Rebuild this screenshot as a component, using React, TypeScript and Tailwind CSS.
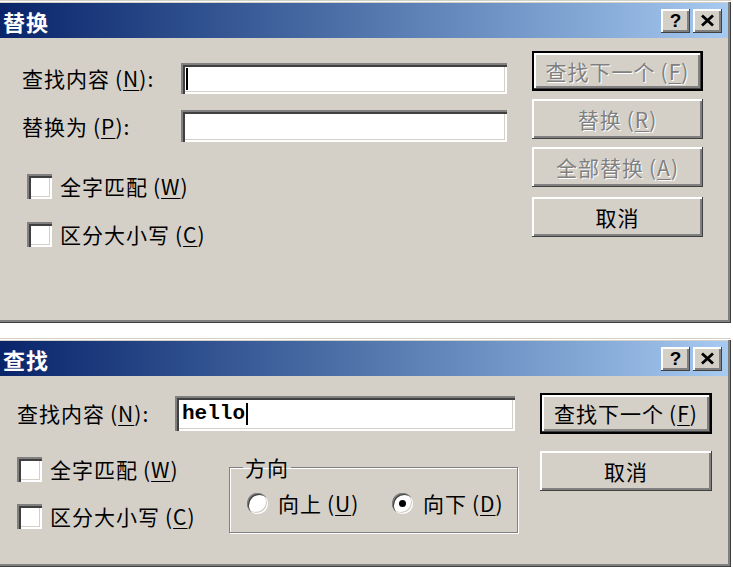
import React from "react";

const raised =
  "bg-[#d4d0c8] shadow-[inset_-1px_-1px_0_#404040,inset_2px_2px_0_#ffffff,inset_-3px_-3px_0_#808080]";
const sunken =
  "bg-white shadow-[inset_2px_2px_0_#808080,inset_4px_4px_0_#404040,inset_-2px_-2px_0_#ffffff,inset_-3px_-3px_0_#d4d0c8]";

function Acc({ k }: { k: string }) {
  return (
    <span className="ml-[5px] tracking-[1px]">
      (<span className="underline underline-offset-[3px] decoration-1">{k}</span>)
    </span>
  );
}

function TitleBar({ title }: { title: string }) {
  return (
    <div className="h-[35px] flex items-center bg-linear-to-r from-[#0a246a] to-[#a6caf0]">
      <span className="pl-[3px] text-white font-bold text-[22px] tracking-[1px] leading-none">
        {title}
      </span>
      <div className="ml-auto mr-[6px] flex gap-[3px]">
        <div
          className={`w-[29px] h-[24px] ${raised} flex items-center justify-center font-['Liberation_Sans',sans-serif] font-bold text-[19px] leading-none text-black`}
        >
          ?
        </div>
        <div className={`w-[29px] h-[24px] ${raised} flex items-center justify-center`}>
          <svg width="15" height="13" viewBox="0 0 15 13">
            <path d="M2 1.5 L13 11.5 M13 1.5 L2 11.5" stroke="#000" strokeWidth="2.8" />
          </svg>
        </div>
      </div>
    </div>
  );
}

function Btn({
  children,
  disabled,
  isDefault,
  h,
}: {
  children: React.ReactNode;
  disabled?: boolean;
  isDefault?: boolean;
  h: string;
}) {
  const text = disabled
    ? "text-[#808080] [text-shadow:1px_1px_0_#ffffff]"
    : "text-black";
  if (isDefault) {
    return (
      <div className={`${h} border-2 border-black flex`}>
        <div className={`flex-1 ${raised} flex items-center justify-center ${text} text-[21px] tracking-[1px] leading-none whitespace-nowrap`}>
          {children}
        </div>
      </div>
    );
  }
  return (
    <div className={`${h} ${raised} flex items-center justify-center ${text} text-[21px] tracking-[1px] leading-none whitespace-nowrap`}>
      {children}
    </div>
  );
}

function Check({ label, k }: { label: string; k: string }) {
  return (
    <div className="flex items-center h-[25px]">
      <div className={`w-[25px] h-[25px] ${sunken}`} />
      <span className="ml-[8px] text-[21px] tracking-[1px] leading-none whitespace-nowrap">
        {label}
        <Acc k={k} />
      </span>
    </div>
  );
}

function Radio({ label, k, on, w }: { label: string; k: string; on?: boolean; w: string }) {
  return (
    <div className={`flex items-center ${w}`}>
      <div className="w-[21px] h-[21px] shrink-0 rounded-full bg-white shadow-[inset_1px_1px_0_#808080,inset_2px_2px_0_#404040,inset_-1px_-1px_0_#ffffff,inset_-2px_-2px_0_#d4d0c8] flex items-center justify-center">
        {on && <div className="w-[7px] h-[7px] rounded-full bg-black" />}
      </div>
      <span className="ml-[10px] text-[21px] tracking-[1px] leading-none whitespace-nowrap">
        {label}
        <Acc k={k} />
      </span>
    </div>
  );
}

const frame =
  "w-[731px] bg-[#d4d0c8] pt-[3px] pr-[3px] pb-[3px] shadow-[inset_0_1px_0_#d4d0c8,inset_0_2px_0_#ffffff,inset_-1px_-1px_0_#404040,inset_-3px_-3px_0_#808080]";

export default function App() {
  return (
    <div className="w-[733px] h-[567px] bg-white overflow-hidden flex flex-col font-['Noto_Sans_CJK_SC',sans-serif] text-black">
      {/* Replace dialog */}
      <div className={`${frame} h-[323px] flex flex-col`}>
        <TitleBar title="替换" />
        <div className="flex pl-[22px]">
          <div className="pt-[25px] flex flex-col">
            <div className="flex items-center">
              <span className="w-[159px] text-[21px] tracking-[1px] leading-none whitespace-nowrap">
                查找内容<Acc k="N" />:
              </span>
              <div className={`w-[326px] h-[31px] ${sunken} flex items-center pl-[5px]`}>
                <div className="w-[2px] h-[22px] bg-black" />
              </div>
            </div>
            <div className="flex items-center mt-[16px]">
              <span className="w-[159px] text-[21px] tracking-[1px] leading-none whitespace-nowrap">
                替换为<Acc k="P" />:
              </span>
              <div className={`w-[326px] h-[32px] ${sunken}`} />
            </div>
            <div className="pl-[5px] mt-[32px] flex flex-col gap-[23px]">
              <Check label="全字匹配" k="W" />
              <Check label="区分大小写" k="C" />
            </div>
          </div>
          <div className="ml-[25px] pt-[13px] w-[171px] flex flex-col">
            <Btn h="h-[40px]" isDefault disabled>
              查找下一个<Acc k="F" />
            </Btn>
            <div className="mt-[8px]">
              <Btn h="h-[40px]" disabled>
                替换<Acc k="R" />
              </Btn>
            </div>
            <div className="mt-[8px]">
              <Btn h="h-[40px]" disabled>
                全部替换<Acc k="A" />
              </Btn>
            </div>
            <div className="mt-[10px]">
              <Btn h="h-[40px]">取消</Btn>
            </div>
          </div>
        </div>
      </div>

      <div className="h-[15px] shrink-0" />

      {/* Find dialog */}
      <div className={`${frame} flex-1 flex flex-col`}>
        <TitleBar title="查找" />
        <div className="flex pl-[17px]">
          <div className="flex flex-col">
            <div className="flex items-center pt-[20px]">
              <span className="w-[158px] text-[21px] tracking-[1px] leading-none whitespace-nowrap">
                查找内容<Acc k="N" />:
              </span>
              <div className={`w-[340px] h-[35px] ${sunken} flex items-center pl-[7px]`}>
                <span className="font-['Liberation_Mono',monospace] font-bold text-[21px] leading-none">
                  hello
                </span>
                <div className="w-[2px] h-[22px] bg-black ml-[1px]" />
              </div>
            </div>
            <div className="flex mt-[26px]">
              <div className="flex flex-col gap-[22px] w-[212px]">
                <Check label="全字匹配" k="W" />
                <Check label="区分大小写" k="C" />
              </div>
              <fieldset className="mt-[0px] w-[289px] h-[76px] border border-[#808080] shadow-[1px_1px_0_#ffffff,inset_1px_1px_0_#ffffff] pl-[17px] pt-[15px]">
                <legend className="ml-[-4px] px-[2px] text-[21px] tracking-[1px] leading-none">
                  方向
                </legend>
                <div className="flex">
                  <Radio label="向上" k="U" w="w-[145px]" />
                  <Radio label="向下" k="D" on w="w-[120px]" />
                </div>
              </fieldset>
            </div>
          </div>
          <div className="ml-[22px] pt-[17px] w-[172px] flex flex-col">
            <Btn h="h-[41px]" isDefault>
              查找下一个<Acc k="F" />
            </Btn>
            <div className="mt-[17px]">
              <Btn h="h-[40px]">取消</Btn>
            </div>
          </div>
        </div>
      </div>
    </div>
  );
}
